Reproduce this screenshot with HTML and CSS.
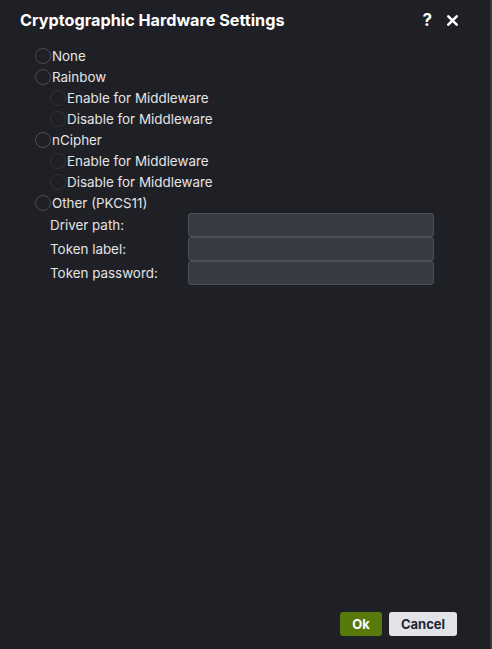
FILE: index.html
```html
<!DOCTYPE html>
<html>
<head>
<meta charset="utf-8">
<link rel="stylesheet" href="styles.css">
</head>
<body>
<div class="dialog">
  <div class="header">
    <div class="title">Cryptographic Hardware Settings</div>
    <div class="actions">
      <span class="help">?</span>
      <svg class="close" width="11" height="11" viewBox="0 0 11 11"><path d="M1.3 1.3 L9.7 9.7 M9.7 1.3 L1.3 9.7" stroke="#fff" stroke-width="2.5" stroke-linecap="round"/></svg>
    </div>
  </div>
  <div class="content">
    <label class="opt"><span class="radio"></span>None</label>
    <label class="opt"><span class="radio"></span>Rainbow</label>
    <label class="opt sub"><span class="radio dim"></span>Enable for Middleware</label>
    <label class="opt sub"><span class="radio dim"></span>Disable for Middleware</label>
    <label class="opt"><span class="radio"></span>nCipher</label>
    <label class="opt sub"><span class="radio dim"></span>Enable for Middleware</label>
    <label class="opt sub"><span class="radio dim"></span>Disable for Middleware</label>
    <label class="opt"><span class="radio"></span>Other (PKCS11)</label>
    <div class="fields">
      <span class="lbl">Driver path:</span><span class="input"></span>
      <span class="lbl">Token label:</span><span class="input"></span>
      <span class="lbl">Token password:</span><span class="input"></span>
    </div>
  </div>
  <div class="footer">
    <button class="btn ok">Ok</button>
    <button class="btn cancel">Cancel</button>
  </div>
</div>
</body>
</html>
```
FILE: styles.css
```css
html, body {
  margin: 0;
  padding: 0;
  background: #1f2025;
}
body {
  font-family: Inter, "Liberation Sans", sans-serif;
  color: #e4e4e6;
}
.dialog {
  box-sizing: border-box;
  width: 492px;
  height: 649px;
  border-right: 2px solid #3a3b40;
  display: flex;
  flex-direction: column;
}
.header {
  height: 40px;
  display: flex;
  align-items: center;
  justify-content: space-between;
  padding: 0 32px 0 20px;
}
.title {
  font-size: 16.2px;
  font-weight: 700;
  color: #ffffff;
}
.actions {
  display: flex;
  align-items: center;
  gap: 15px;
}
.help {
  font-size: 17px;
  font-weight: 700;
  color: #fff;
  line-height: 1;
}
.close {
  display: block;
}
.content {
  padding: 5px 0 0 35px;
  flex: 1;
}
.opt {
  display: flex;
  align-items: center;
  height: 21px;
  font-size: 13.4px;
  gap: 1px;
}
.opt.sub {
  padding-left: 15px;
}
.radio {
  width: 14px;
  height: 14px;
  border: 1px solid #4a4c52;
  border-radius: 50%;
  box-sizing: content-box;
  flex: none;
}
.radio.dim {
  border-color: #303238;
}
.fields {
  display: grid;
  grid-template-columns: 138px 246px;
  margin-left: 15px;
  font-size: 13.4px;
}
.lbl {
  height: 24px;
  display: flex;
  align-items: center;
}
.input {
  box-sizing: border-box;
  height: 24px;
  background: #383b44;
  border: 1px solid #4c4f59;
  border-radius: 3px;
}
.footer {
  display: flex;
  justify-content: flex-end;
  gap: 7px;
  padding: 0 33px 13px 0;
}
.btn {
  font-family: Inter, "Liberation Sans", sans-serif;
  font-size: 13px;
  font-weight: 700;
  height: 24px;
  border: none;
  border-radius: 3px;
  padding: 0;
}
.ok {
  width: 42px;
  background: #577a0b;
  color: #ffffff;
}
.cancel {
  width: 68px;
  background: #e2e3e7;
  color: #1f2433;
}
```
